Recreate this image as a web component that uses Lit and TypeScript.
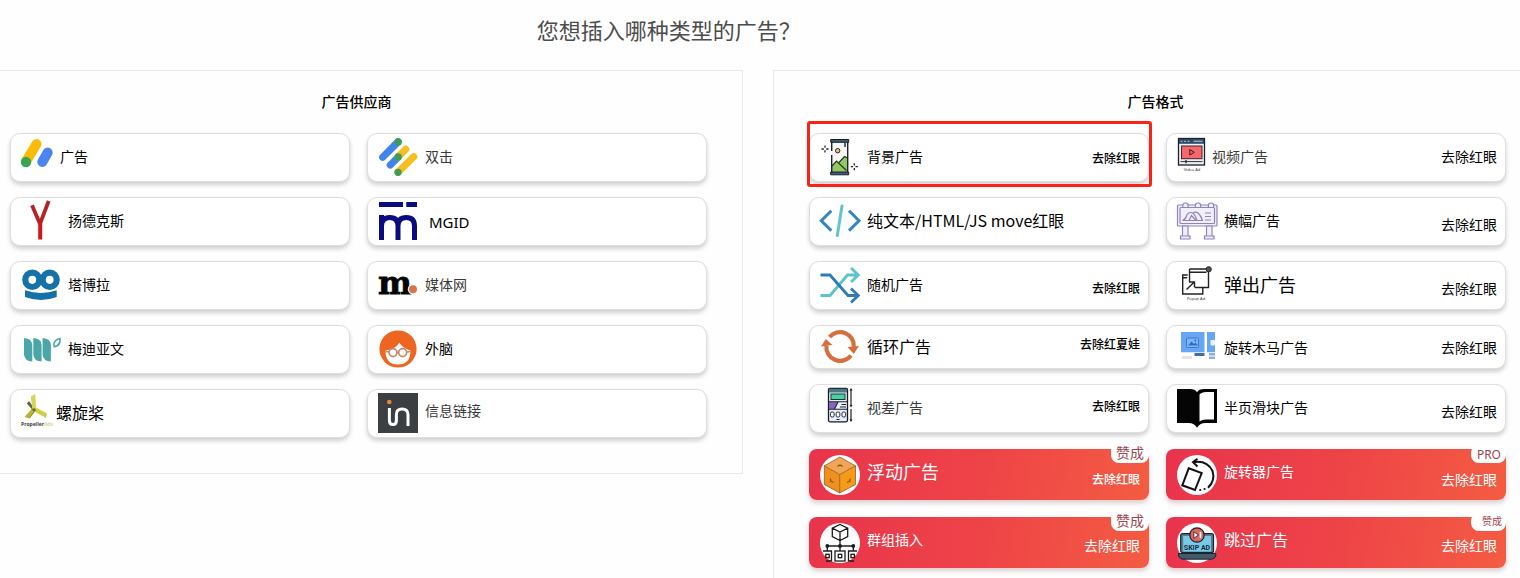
import { LitElement, html, svg, css, nothing, TemplateResult } from "lit";
import { customElement, property } from "lit/decorators.js";
import { classMap } from "lit/directives/class-map.js";

interface Option {
  icon: string;
  label: string;
  size?: "md" | "lg" | "latin";
  shift?: "flat" | "high";
  soft?: boolean;
  note?: string;
  noteSmall?: boolean;
  noteShift?: "up" | "down" | "low";
  badge?: string;
  badgeSize?: "small" | "latin";
  compact?: boolean;
  marked?: boolean;
}

const box = (content: TemplateResult, width = 40) =>
  html`<svg class="icon" width=${width} height="40" viewBox="0 0 ${width} 40" aria-hidden="true">${content}</svg>`;

const ICONS: Record<string, TemplateResult> = {
  adsense: box(
    svg`<g stroke-linecap="round" stroke-width="10"><path d="M6 23.5 16.5 6" stroke="#fbbc08"/><path d="M22.3 24 27.7 14.5" stroke="#4a86ee"/></g><circle cx="6" cy="24" r="5.2" fill="#37a552"/>`,
    32
  ),
  yandex: box(
    svg`<path d="M12 3.2 20 22M28.7-1 20.3 21" fill="none" stroke="#b52424" stroke-width="3.8"/><path d="M20.2 20V37.5" stroke="#d01818" stroke-width="4"/>`
  ),
  taboola: box(
    svg`<g fill="none" stroke="#1472a8" stroke-width="6.2"><ellipse cx="12.3" cy="13.8" rx="7" ry="7.2"/><ellipse cx="29.7" cy="13.8" rx="7" ry="7.2"/></g><path d="M5 24.3Q21 29.5 36.7 24.3V31Q21 37 5 31Z" fill="#1472a8"/>`
  ),
  mediavine: box(
    svg`<g fill="#4ba6a9"><path d="M4 8q8 .5 8.300 7v16.500q-7.800-.5-8.300-7z"/><path d="M13.300 8q8 .5 8.300 7v16.500q-7.800-.5-8.300-7z"/><path d="M22.600 8q8 .5 8.300 7v16.500q-7.800-.5-8.300-7z"/></g><path d="M40 8.500q.8 7-5.600 8.300-2-6.800 5.600-8.300z" fill="none" stroke="#4ba6a9" stroke-width="1.600"/>`
  ),
  propeller: box(
    svg`<path d="M13.500 17 7 9.500l2-2.500 5 7z" fill="#5a5f4e"/><path d="M10.800 2.500 15.300 0l.8 15.500-3.600 2z" fill="#d8d458"/><path d="M12 14.500l4 1.500L9.500 24.500 4.500 23z" fill="#b9b634"/><path d="M12.500 16.500l3.500-3 11 6-1 4.500z" fill="#d3ce47"/><path d="M7 9l7 8M15.500 16l-6 8" stroke="#77762c" stroke-width=".7"/><circle cx="14" cy="15.800" r="1.500" fill="#6b6a2a"/><text x="1" y="32" font-size="5" font-weight="700" fill="#3b4040">Propeller<tspan fill="#d6da98">Ads</tspan></text>`,
    28
  ),
  doubleclick: box(
    svg`<g stroke-linecap="round" stroke-width="7.2"><path d="M5.700 19.300 21 3.900" stroke="#4285e8"/><path d="M13.300 27l8-8" stroke="#4285e8"/><path d="M21.300 18.700l7.400-7.400" stroke="#f6bf1e"/><path d="M21 34.300 36.700 18.700" stroke="#f6bf1e"/></g><g fill="#3f9a56"><circle cx="21.200" cy="3.900" r="3.600"/><circle cx="21.200" cy="18.900" r="3.600"/><circle cx="21" cy="34.300" r="3.600"/></g>`
  ),
  mgid: box(
    svg`<path d="M2 2.500H26M29.300 2.500H40" stroke="#0b0b80" stroke-width="5"/><path d="M4.500 38V13M4.500 24c0-6 3-8.500 8.300-8.500S21 18 21 24v14M21 24c0-6 3-8.500 8.300-8.500S37.500 18 37.500 24v14" fill="none" stroke="#0b0b80" stroke-width="5"/>`,
    44
  ),
  medianet: box(
    svg`<text class="logo-serif" x="1" y="28" font-size="32" font-weight="700" fill="#050505" stroke="#050505" stroke-width=".8">m</text><circle cx="36" cy="23.300" r="5.200" fill="#fff"/><circle cx="36" cy="23.300" r="4" fill="#dd7448"/>`
  ),
  outbrain: box(
    svg`<circle cx="21" cy="19" r="18.600" fill="#ee6522"/><path d="M8.500 20.500Q18 19.500 22.300 12.700 25.500 18 33.500 20.500 33.500 34.500 21 34.500 8.500 34.500 8.500 20.500Z" fill="#fff"/><g fill="none" stroke="#c78a6c" stroke-width="1.700"><circle cx="16" cy="22.600" r="4"/><circle cx="25.700" cy="22.600" r="4"/><path d="M8.500 21.500 12 22M29.700 22 33.500 21.500M20 22.300h1.700"/></g>`
  ),
  infolinks: box(
    svg`<path d="M1-1H41V39H1z" fill="#3b3f42"/><circle cx="12.300" cy="8" r="2.300" fill="#e58a33"/><path d="M12.400 14v12.500q0 4 3.500 4t3.500-4V20.500q0-5.500 5.700-5.500t5.900 5.500V32" fill="none" stroke="#fff" stroke-width="3"/>`
  ),
  background: box(
    svg`<path d="M13 4h15.500v30H13z" fill="#f6f6f4"/><path d="M13 28l4.500-5 3 2 5-7 3 1.500V34H13z" fill="#93c765"/><path d="M13 28l4.500-5 10 9.500M20 24.500l5.500-6 3 1.500" stroke="#25381c" stroke-width="1.200" fill="none"/><path d="M12.700 4v9M12.700 17v17M28.700 4v30M26 5v4" stroke="#1b2530" stroke-width="1.400"/><g fill="#3f5a74" stroke="#17212c" stroke-width="1"><path d="M11.700 1.500h18v2.800h-18zM11.700 34h18v2.800h-18z"/></g><circle cx="18.700" cy="12.700" r="2.200" fill="#f0c08a" stroke="#2c2018"/><path d="M6 7.500v2.300M6 12.200v2.300M2.500 11h2.300M7.200 11h2.300M35.300 25.200v2.300M35.300 30v2.300M31.800 28.700h2.300M36.500 28.700h2.300" stroke="#222" stroke-width="1.300"/>`
  ),
  code: box(
    svg`<path d="M12.300 8.800 2.300 18.700l10 9.900M30 8.800l10 9.900-10 9.900" fill="none" stroke="#3485c0" stroke-width="3"/><path d="M23 4 18.300 33.500" stroke="#62c5cd" stroke-width="3" stroke-linecap="round"/>`
  ),
  shuffle: box(
    svg`<g fill="none" stroke-width="2.800"><path d="M1.500 29.500H11L28.500 9H39M32 2l7.300 7L32 16" stroke="#5cc3cf"/><path d="M1.500 9H11L29 29.500H39M32 22.500l7.300 7L32 36.500" stroke="#2f7cb8"/></g>`
  ),
  loop: box(
    svg`<g fill="none" stroke="#d4703c" stroke-width="4.200"><path d="M10.500 10A13.800 13.800 0 0 1 34.800 20"/><path d="M32 28.500A13.800 13.800 0 0 1 7.400 18.500"/></g><g fill="#d4703c"><path d="M2 19.500 6.800 12 13.500 18z"/><path d="M28.500 20 40 19 34.800 27z"/></g>`
  ),
  parallax: box(
    svg`<rect x="9.500" y="-.7" width="19" height="33.500" rx="1.500" fill="#e9edf5" stroke="#151c28" stroke-width="1.300"/><path d="M10-.2h18v3.700H10z" fill="#4c7886"/><rect x="12" y="5" width="14" height="5.500" fill="#45d3a0" stroke="#153a35"/><path d="M10 13h9l-3.500 7H10z" fill="#8b64c0"/><path d="M10 12.700h18M10 20.300h18M19 13l-3.500 7M21 18h6M22.500 15.500H27" stroke="#1c2234" stroke-width="1.100"/><g fill="#fff" stroke="#1a2742"><rect x="11.500" y="23" width="3.600" height="5" rx="1.500"/><rect x="17.200" y="23" width="3.600" height="5" rx="1.500"/><rect x="23" y="23" width="3.600" height="5" rx="1.500"/></g><path d="M17.500 30.500h3M32 0v17M32 20v12" stroke="#222" stroke-width="1.200"/><path d="M30.500 1.500 32-1l1.500 2.500zM30.500 16h3L32 18.500zM30.500 30.500h3L32 33z" fill="#222"/>`
  ),
  cube: box(
    svg`<circle cx="21" cy="20" r="20" fill="#fff"/><path d="M20.700 2 36.500 10.800 20.700 19.500 5.300 10.800z" fill="#f2a655"/><path d="M5.300 10.800 20.700 19.500V38L5.300 29.500z" fill="#ee8f1e"/><path d="M36.500 10.800 20.700 19.500V38L36.500 29.500z" fill="#f79a16"/><path d="M20.700 2 36.500 10.800V29.500L20.700 38 5.300 29.500V10.800zM5.300 10.800l15.400 8.700 15.800-8.700M20.700 19.500V38" fill="none" stroke="#7c501c" stroke-width=".7"/><path d="M18.500 11.500q2.500-2.500 5 0M11.500 23.500v2.500l3 1.500M31 23.500v2.500l-3 1.500" fill="none" stroke="#8a5a1c" stroke-width="1.300"/>`
  ),
  group: box(
    svg`<circle cx="21" cy="20" r="20" fill="#fff"/><g fill="none" stroke="#1c1c1c" stroke-width="1.300"><path d="M21 1.500l7.700 3.700v8.500L21 17.500l-7.700-3.800V5.200zM13.300 5.200 21 9l7.700-3.800M21 9v8.500M21 17.500V28M8.300 28v-5h26v5"/><rect x="16" y="28" width="10" height="10"/><path d="M12.500 38V28H4M29.500 38V28H38"/><rect x="19.300" y="31.300" width="3.400" height="3.400"/><rect x="6.800" y="31.300" width="3.400" height="3.400"/><rect x="32" y="31.300" width="3.400" height="3.400"/><path d="M7 38h5.500M29.500 38H35"/></g><g fill="#1c1c1c"><circle cx="21" cy="23" r="1.900"/><circle cx="8.300" cy="23" r="1.900"/><circle cx="34.300" cy="23" r="1.900"/></g>`
  ),
  video: box(
    svg`<rect x="2.500" y=".5" width="26" height="26.500" fill="#eef0f4" stroke="#1b212c" stroke-width="1.300"/><path d="M3 1h25v4.800H3z" fill="#2d4965"/><path d="M4.500 3.300h9" stroke="#8fb0cc" stroke-width="1.200" stroke-dasharray="2 1.500"/><path d="M17.500 3.300h9" stroke="#8ea6bb" stroke-width="1.500"/><rect x="5.500" y="8" width="20.500" height="12.700" fill="#f4686b" stroke="#40222a"/><path d="M13.800 11.500v5.500l4.500-2.700z" fill="none" stroke="#3a1a20"/><path d="M4.500 23.600h22" stroke="#333" stroke-width="1"/><path d="M10 22v3.200" stroke="#222" stroke-width="1.300"/><text x="16" y="33" font-size="4" text-anchor="middle" fill="#222">Video Ad</text>`,
    28
  ),
  banner: box(
    svg`<g fill="#f2effa" stroke="#8f84bd" stroke-width="1.200"><rect x="1.500" y="3" width="39.500" height="21" rx="1"/><rect x="4" y="5.500" width="34.500" height="16" rx="1"/><path d="M6.500 24h5.500v10h-5.500zM30.500 24h5.500v10h-5.500zM4.500 34h9.500v3H4.500zM28.500 34H38v3h-9.500z"/><path d="M7 5.500q-1-4.500 2.500-4.500t2.500 4.500zM19.500 5.500q-1-4.500 2.500-4.500t2.500 4.500zM32.500 5.500q-1-4.500 2.500-4.500t2.500 4.500z"/><path d="M6.500 18.500q3-1 4-4.500 1-3.500 4.500-3.500t6 8zM13 18.500l2.500-5 4.500 5M17 10.500q6-2.500 9.500 8H21"/><path d="M29 11h6M29 14.500h6M29 18h6"/></g>`
  ),
  popup: box(
    svg`<g fill="none" stroke="#222" stroke-width="1.400"><path d="M13.500 3h19v18.500H19M13.500 3v13M13.500 6.200h17M26.800 22v6H6.700V9h5M6.700 11.800h4.500"/><path d="M10.500 23.500 18 16.300M13 16h5.500v5.500"/></g><circle cx="32.700" cy="3.300" r="2.600" fill="#555" stroke="#222"/><text x="20" y="34" font-size="4" text-anchor="middle" fill="#222">Popup Ad</text>`
  ),
  carousel: box(
    svg`<g fill="#68a6f5"><path d="M5 5h23.500v20.300H5zM31 5h8v20.300h-8z"/></g><rect x="10.500" y="11" width="12" height="9.500" rx="1" fill="#7fb4f8" stroke="#3c78d0"/><path d="M12 18.500l3.500-4 2.500 2.500 1.500-1.500 2.500 3z" fill="#2f6cc6"/><circle cx="19.300" cy="13.500" r="1" fill="#2f6cc6"/><rect x="34.500" y="13" width="4.500" height="5.500" rx="1" fill="#e8f2ff"/><path d="M6 29h10v3H6z" fill="#e2e4e8"/><path d="M18.500 26h10v3h-10z" fill="#3e6ea8"/><path d="M33 26h6v2.500h-6zM33 29.500h6V32h-6z" fill="#8bb2e2"/>`
  ),
  book: box(
    svg`<path d="M1 0h13q5 0 7 3.200Q23 0 28 0h13v34H29.500Q23.500 34 21 38.700 18.500 34 12.500 34H1z" fill="#050505"/><path d="M23.500 5.500Q25.500 3 30 3h8v27.500h-8.500q-3.500 0-6 2z" fill="#fff"/>`
  ),
  rotator: box(
    svg`<circle cx="21" cy="20" r="20" fill="#fff"/><g fill="none" stroke="#121212" stroke-width="2"><path d="M12.700 13.300 25.700 18 19 35 6.300 30.300z"/><path d="M17.500 7.200Q31 5 36.500 16q3 9.500-4.500 16.800"/><path d="M21.500 3.800 17 7.200l4.500 4.300"/></g><g fill="#121212"><circle cx="24.200" cy="35" r="1.100"/><circle cx="28.600" cy="34" r="1.100"/></g>`
  ),
  skip: box(
    svg`<circle cx="21" cy="20" r="20" fill="#fff"/><rect x="4.700" y="10.700" width="32.800" height="19" rx="2" fill="#5d7c90" stroke="#17252f" stroke-width="1.200"/><rect x="7.200" y="13" width="27.800" height="15.500" fill="#78cbe8"/><path d="M2.500 30.500h37.300v2.500q-1.500 3.200-4.500 3.200H7q-3.200 0-4.500-3.200z" fill="#44596a" stroke="#17252f"/><circle cx="21" cy="12" r="7.200" fill="#d86963" stroke="#2a1a20" stroke-width="1.200"/><path d="M17.800 8.800v6.400l4.700-3.200z" fill="#fff" stroke="#2a1a20" stroke-width=".8"/><path d="M24.500 8.800v6.400" stroke="#fff" stroke-width="1.600"/><text class="logo-sans" x="21" y="26.500" font-size="7" font-weight="700" text-anchor="middle" fill="#13283a">SKIP AD</text>`
  ),
};

const VENDORS: Option[] = [
  { icon: "adsense", label: "广告" },
  { icon: "doubleclick", label: "双击", soft: true },
  { icon: "yandex", label: "扬德克斯" },
  { icon: "mgid", label: "MGID", size: "latin", shift: "flat" },
  { icon: "taboola", label: "塔博拉" },
  { icon: "medianet", label: "媒体网", soft: true },
  { icon: "mediavine", label: "梅迪亚文" },
  { icon: "outbrain", label: "外脑" },
  { icon: "propeller", label: "螺旋桨", size: "md" },
  { icon: "infolinks", label: "信息链接", soft: true, shift: "high" },
];

const NOTE = "去除红眼";

const FORMATS: Option[] = [
  { icon: "background", label: "背景广告", note: NOTE, noteSmall: true, marked: true },
  { icon: "video", label: "视频广告", soft: true, note: NOTE, noteShift: "up" },
  { icon: "code", label: "纯文本/HTML/JS move红眼", size: "md" },
  { icon: "banner", label: "横幅广告", note: NOTE, noteShift: "down" },
  { icon: "shuffle", label: "随机广告", note: NOTE, noteSmall: true, noteShift: "down" },
  { icon: "popup", label: "弹出广告", size: "lg", note: NOTE, noteShift: "down" },
  { icon: "loop", label: "循环广告", size: "md", note: "去除红夏娃", noteSmall: true, noteShift: "up", compact: true },
  { icon: "carousel", label: "旋转木马广告", note: NOTE, compact: true, shift: "flat" },
  { icon: "parallax", label: "视差广告", soft: true, note: NOTE, noteSmall: true, noteShift: "up" },
  { icon: "book", label: "半页滑块广告", note: NOTE, noteShift: "down" },
  { icon: "cube", label: "浮动广告", size: "lg", shift: "high", note: NOTE, noteSmall: true, noteShift: "low", badge: "赞成" },
  { icon: "rotator", label: "旋转器广告", shift: "high", note: NOTE, noteShift: "low", badge: "PRO", badgeSize: "latin" },
  { icon: "group", label: "群组插入", shift: "high", note: NOTE, noteShift: "down", badge: "赞成" },
  { icon: "skip", label: "跳过广告", size: "md", shift: "high", note: NOTE, noteShift: "down", badge: "赞成", badgeSize: "small" },
];

@customElement("option-card")
export class OptionCard extends LitElement {
  @property({ attribute: false }) option!: Option;

  static styles = css`
    :host {
      display: block;
    }
    .card {
      position: relative;
      box-sizing: border-box;
      display: flex;
      align-items: center;
      width: 100%;
      min-height: 49px;
      margin: 0;
      padding: 0 8px 0 9px;
      border: 1px solid #dedede;
      border-radius: 10px;
      background: #fff;
      box-shadow: 0 3px 4px rgba(0, 0, 0, 0.18);
      color: #000;
      font: inherit;
      font-size: 14px;
      line-height: 20px;
      text-align: left;
      cursor: pointer;
    }
    .compact {
      min-height: 44px;
    }
    .pro {
      min-height: 51px;
      margin: 1px 0;
      padding: 0 9px 0 10px;
      border: 0;
      border-radius: 8px;
      background: linear-gradient(100deg, #e8344c 0%, #ee4347 50%, #f45c42 100%);
      box-shadow: 0 3px 5px rgba(120, 60, 60, 0.25);
      color: #fff;
    }
    .marked::after {
      content: "";
      position: absolute;
      inset: -13px -4px -6px -3px;
      border: 3px solid #fb2218;
      border-radius: 3px;
      pointer-events: none;
    }
    .icon {
      flex: none;
      overflow: visible;
      margin-right: 8px;
      font-family: "Open Sans", "Noto Sans", sans-serif;
    }
    .logo-serif {
      font-family: "DejaVu Serif", serif;
    }
    .logo-sans {
      font-family: "Roboto", sans-serif;
    }
    .label {
      flex: 1;
      padding-bottom: 3px;
      white-space: nowrap;
    }
    .label.flat {
      padding-bottom: 0;
    }
    .label.high {
      padding-bottom: 8px;
    }
    .soft {
      color: #3a3a3a;
    }
    .md {
      font-size: 16px;
    }
    .lg {
      font-size: 18px;
    }
    .latin {
      font-family: "Noto Sans", sans-serif;
      font-size: 15px;
    }
    .note {
      white-space: nowrap;
    }
    .note.up {
      padding-bottom: 4px;
    }
    .note.down {
      padding-top: 4px;
    }
    .note.low {
      padding-top: 8px;
    }
    .small {
      font-size: 12px;
      font-weight: 500;
    }
    .small.up {
      padding-bottom: 6px;
    }
    .badge {
      position: absolute;
      top: -4px;
      right: 0;
      box-sizing: border-box;
      min-width: 35px;
      height: 18px;
      padding: 0 5px;
      border-radius: 8px;
      background: #fff;
      color: #9c4650;
      font-size: 14px;
      line-height: 15px;
      text-align: right;
    }
    .badge-base {
      border-top-left-radius: 0;
    }
    .badge-latin {
      font-family: "Noto Sans", sans-serif;
      font-size: 12px;
      line-height: 20px;
    }
    .badge-small {
      padding: 0 4px;
      font-size: 10px;
    }
  `;

  render() {
    const o = this.option;
    const card = { card: true, compact: !!o.compact, pro: !!o.badge, marked: !!o.marked };
    const label = { label: true, soft: !!o.soft, [o.size ?? "base"]: true, [o.shift ?? "mid"]: true };
    const note = { note: true, small: !!o.noteSmall, [o.noteShift ?? "mid"]: true };
    const badge = { badge: true, [`badge-${o.badgeSize ?? "base"}`]: true };
    return html`<button type="button" class=${classMap(card)}>
      ${ICONS[o.icon]}
      <span class=${classMap(label)}>${o.label}</span>
      ${o.note ? html`<span class=${classMap(note)}>${o.note}</span>` : nothing}
      ${o.badge ? html`<span class=${classMap(badge)}>${o.badge}</span>` : nothing}
    </button>`;
  }
}

@customElement("app-root")
export class AppRoot extends LitElement {
  static styles = css`
    :host {
      display: flex;
      flex-direction: column;
      min-height: 100vh;
      background: #fefefe;
      color: #000;
      font-family: "Noto Sans CJK SC", sans-serif;
    }
    .title {
      margin: 0;
      padding: 13px 12% 25px 0;
      color: #4c4c4c;
      font-size: 22px;
      font-weight: 400;
      line-height: 32px;
      text-align: center;
    }
    .panels {
      flex: 1;
      display: grid;
      grid-template-columns: 743fr 747fr;
      gap: 30px;
    }
    .panel {
      box-sizing: border-box;
      border: 1px solid #e9e9e9;
    }
    .vendors {
      align-self: start;
      border-left: 0;
      padding: 19px 35px 35px 10px;
    }
    .formats {
      border-right: 0;
      border-bottom: 0;
      padding: 19px 14px 9px 35px;
    }
    .heading {
      margin: 0 0 21px;
      padding-right: 4px;
      font-size: 14px;
      font-weight: 500;
      line-height: 22px;
      text-align: center;
    }
    .cards {
      display: grid;
      grid-template-columns: 1fr 1fr;
      gap: 15px 17px;
    }
  `;

  private panel(kind: string, heading: string, options: Option[]) {
    return html`<section class="panel ${kind}">
      <h2 class="heading">${heading}</h2>
      <div class="cards">${options.map((o) => html`<option-card .option=${o}></option-card>`)}</div>
    </section>`;
  }

  render() {
    return html`
      <h1 class="title">您想插入哪种类型的广告？</h1>
      <main class="panels">
        ${this.panel("vendors", "广告供应商", VENDORS)}
        ${this.panel("formats", "广告格式", FORMATS)}
      </main>
    `;
  }
}
